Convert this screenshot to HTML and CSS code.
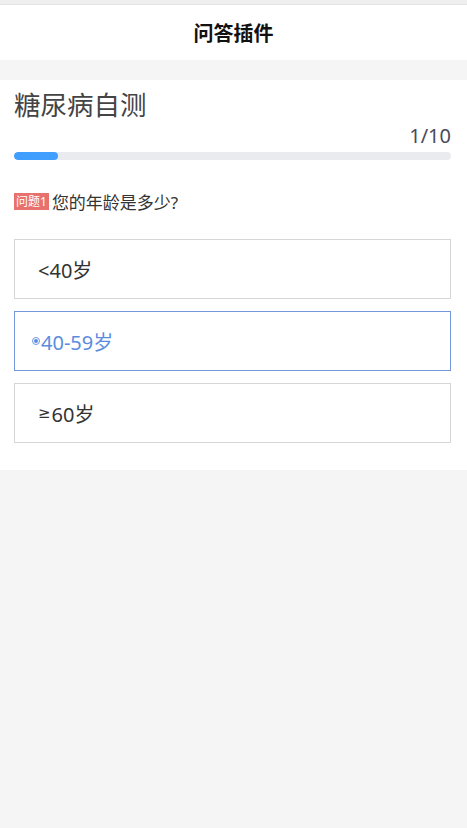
FILE: index.html
```html
<!DOCTYPE html>
<html lang="zh-CN">
<head>
<meta charset="UTF-8">
<meta name="viewport" content="width=device-width, initial-scale=1.0">
<title>问答插件</title>
<link rel="stylesheet" href="styles.css">
</head>
<body>

<div class="top-strip"></div>
<header class="nav-title">问答插件</header>

<div class="quiz-card">
    <h1 class="quiz-title">糖尿病自测</h1>
    <div class="quiz-count">1/10</div>
    <div class="progress">
        <div class="progress-fill" style="width: 10%"></div>
    </div>

    <div class="question">
        <span class="question-tag">问题1</span>
        <span class="question-text">您的年龄是多少?</span>
    </div>

    <div class="options">
        <div class="option">&lt;40岁</div>
        <div class="option selected"><span class="radio"></span>40-59岁</div>
        <div class="option"><span class="sym">≥</span>60岁</div>
    </div>
</div>

</body>
</html>
```

FILE: styles.css
```css
body {
    margin: 0;
    padding: 0;
    background-color: #f5f5f5;
    font-family: "Noto Sans", "Noto Sans CJK SC", sans-serif;
    color: #333;
}

.top-strip {
    height: 4px;
    background-color: #efefef;
    border-bottom: 1px solid #e3e3e3;
}

.nav-title {
    height: 55px;
    background-color: #fff;
    display: flex;
    justify-content: center;
    align-items: center;
    font-size: 20px;
    font-weight: bold;
    color: #111;
}

.quiz-card {
    margin-top: 20px;
    background-color: #fff;
    padding: 8px 16px 27px 14px;
}

.quiz-title {
    margin: 0;
    font-size: 26.5px;
    font-weight: normal;
    line-height: 34px;
    color: #444;
}

.quiz-count {
    margin-top: 2px;
    text-align: right;
    font-size: 20px;
    line-height: 24px;
    color: #4a4a5a;
}

.progress {
    margin-top: 4px;
    height: 8px;
    border-radius: 4px;
    background-color: #e9ebee;
    overflow: hidden;
}

.progress-fill {
    height: 100%;
    border-radius: 4px;
    background-color: #409eff;
}

.question {
    margin-top: 29px;
    display: flex;
    align-items: center;
    height: 24px;
}

.question-tag {
    background-color: #e8716d;
    color: #fff;
    font-size: 12px;
    line-height: 17px;
    padding: 0 2px;
    margin-right: 3px;
}

.question-text {
    font-size: 17px;
    color: #333;
}

.options {
    margin-top: 26px;
    display: flex;
    flex-direction: column;
    gap: 12px;
}

.option {
    height: 58px;
    border: 1px solid #d6d6d6;
    display: flex;
    align-items: center;
    padding-left: 23px;
    font-size: 20px;
    color: #333;
}

.option .sym {
    font-family: "DejaVu Sans", sans-serif;
    font-size: 15px;
    margin-right: 1px;
}

.option.selected {
    border-color: #7396dd;
    color: #5b8ddf;
    padding-left: 17px;
}

.radio {
    width: 6px;
    height: 6px;
    border: 1px solid #7396dd;
    border-radius: 50%;
    margin-right: 1px;
    display: flex;
    justify-content: center;
    align-items: center;
}

.radio::after {
    content: "";
    width: 4px;
    height: 4px;
    border-radius: 50%;
    background-color: #5b8ddf;
}
```
